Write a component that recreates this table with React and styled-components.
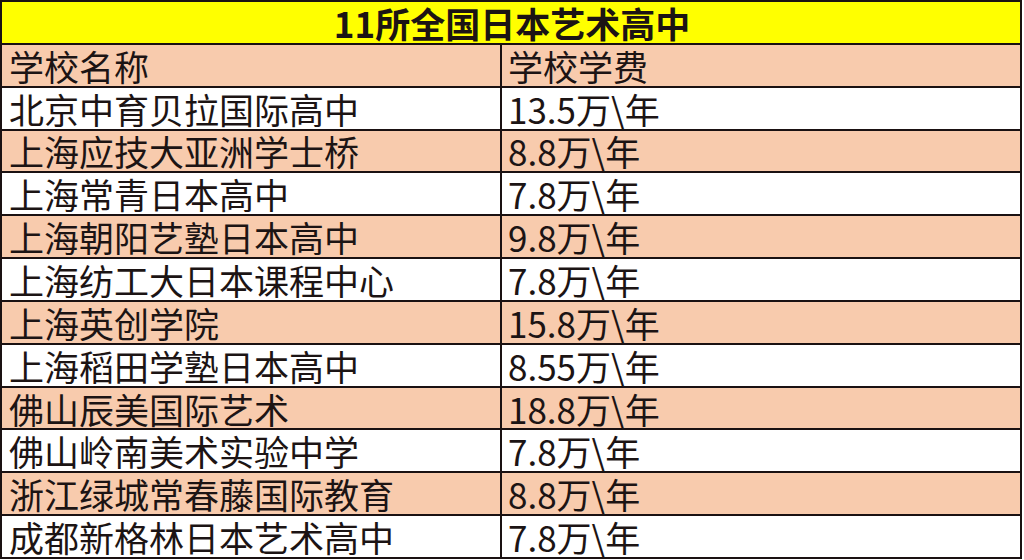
import React from 'react';
import styled, { createGlobalStyle } from 'styled-components';

const colors = {
    border: '#1a1112',
    title: '#ffff00',
    peach: '#f8cbad',
    white: '#ffffff',
    text: '#1c1414'
};

const GlobalStyle = createGlobalStyle`
    html, body {
        margin: 0;
        padding: 0;
        background: ${colors.white};
    }
    body {
        font-family: 'Noto Sans CJK SC', 'Noto Sans', sans-serif;
        color: ${colors.text};
    }
`;

const Table = styled.div`
    width: 1022px;
    height: 559px;
    display: grid;
    grid-template-columns: 498px 1fr;
    grid-auto-rows: 1fr;
    gap: 2px;
    padding: 2px;
    background: ${colors.border};
    box-sizing: border-box;
`;

const TitleCell = styled.div`
    grid-column: 1 / span 2;
    background: ${colors.title};
    display: flex;
    align-items: center;
    justify-content: center;
    font-size: 35px;
    font-weight: 700;
    line-height: 1;
    padding-left: 2px;
`;

const Cell = styled.div`
    background: ${props => (props.$shaded ? colors.peach : colors.white)};
    display: flex;
    align-items: center;
    padding-left: ${props => (props.$right ? 6 : 7)}px;
    font-size: 35px;
    line-height: 1;
    white-space: nowrap;
`;

const rows = [
    ['北京中育贝拉国际高中', '13.5万\\年'],
    ['上海应技大亚洲学士桥', '8.8万\\年'],
    ['上海常青日本高中', '7.8万\\年'],
    ['上海朝阳艺塾日本高中', '9.8万\\年'],
    ['上海纺工大日本课程中心', '7.8万\\年'],
    ['上海英创学院', '15.8万\\年'],
    ['上海稻田学塾日本高中', '8.55万\\年'],
    ['佛山辰美国际艺术', '18.8万\\年'],
    ['佛山岭南美术实验中学', '7.8万\\年'],
    ['浙江绿城常春藤国际教育', '8.8万\\年'],
    ['成都新格林日本艺术高中', '7.8万\\年']
];

const App = () => {
    return (
        <>
            <GlobalStyle />
            <Table>
                <TitleCell>11所全国日本艺术高中</TitleCell>
                <Cell $shaded>学校名称</Cell>
                <Cell $shaded $right>学校学费</Cell>
                {rows.map(([name, fee], i) => (
                    <React.Fragment key={name}>
                        <Cell $shaded={i % 2 === 1}>{name}</Cell>
                        <Cell $shaded={i % 2 === 1} $right>{fee}</Cell>
                    </React.Fragment>
                ))}
            </Table>
        </>
    );
};

export default App;
